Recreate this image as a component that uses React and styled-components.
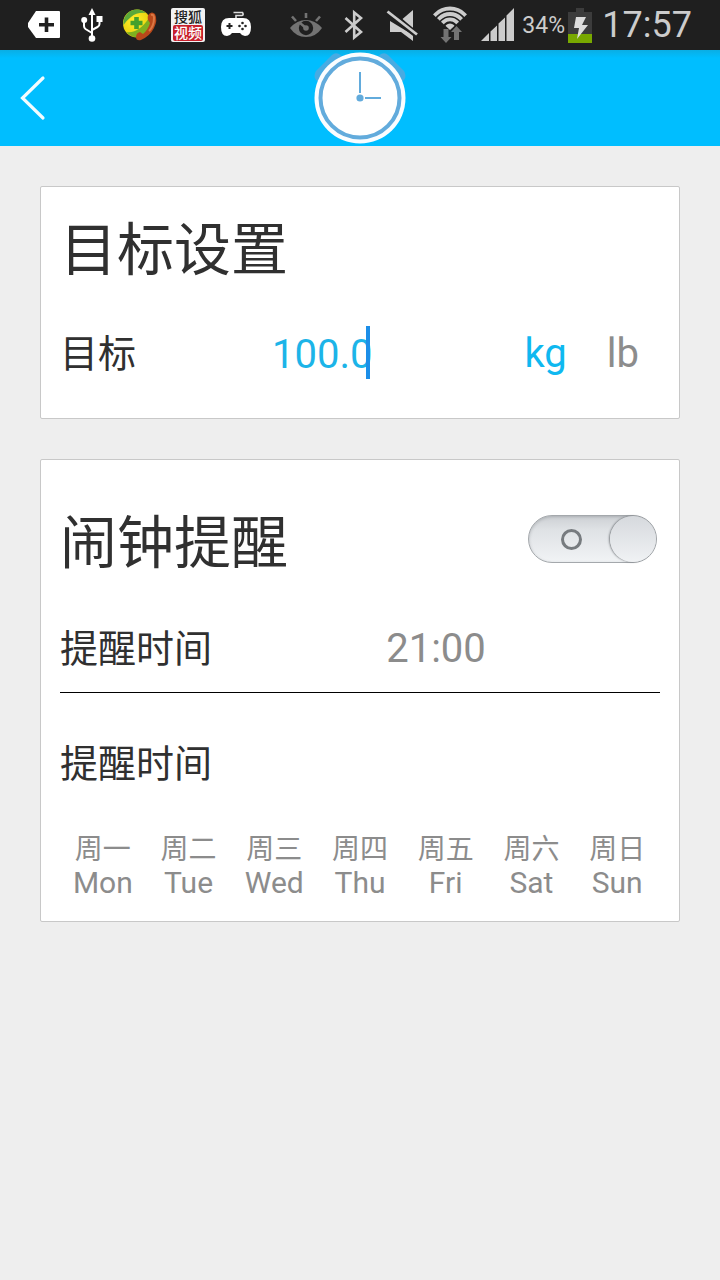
import React, { useState } from "react";
import styled, { createGlobalStyle } from "styled-components";

const DAYS = [
  { zh: "周一", en: "Mon" },
  { zh: "周二", en: "Tue" },
  { zh: "周三", en: "Wed" },
  { zh: "周四", en: "Thu" },
  { zh: "周五", en: "Fri" },
  { zh: "周六", en: "Sat" },
  { zh: "周日", en: "Sun" },
];

const PlusTagIcon = () => (
  <svg width="34" height="28" viewBox="0 0 34 28">
    <path d="M9 0H32Q33 0 33 1V26Q33 27 32 27H9L1 16V12Z" fill="#fff" />
    <path d="M19.500 6.500V21M12 13.700H27" stroke="#1f1f1f" strokeWidth="3.600" />
  </svg>
);

const UsbIcon = () => (
  <svg width="22" height="34" viewBox="0 0 22 34" fill="none" stroke="#fff" strokeWidth="2">
    <path d="M11 4V30M11 25L4.500 21Q3 20 3 18V12M11 22L16.500 19Q18.500 18 18.500 16V11" />
    <path d="M11 0L14.500 7H7.500Z" fill="#fff" stroke="none" />
    <circle cx="3.200" cy="12" r="3" fill="#fff" stroke="none" />
    <rect x="15.500" y="8" width="6" height="6" fill="#fff" stroke="none" />
    <circle cx="11" cy="30.500" r="3.300" fill="#fff" stroke="none" />
  </svg>
);

const PhoneBallIcon = () => (
  <svg width="36" height="34" viewBox="0 0 36 34">
    <defs>
      <radialGradient id="ball" cx="0.4" cy="0.4" r="0.65">
        <stop offset="0" stopColor="#fff02a" />
        <stop offset="0.75" stopColor="#ecd512" />
        <stop offset="1" stopColor="#b09a0c" />
      </radialGradient>
    </defs>
    <circle cx="15" cy="15.500" r="14" fill="url(#ball)" />
    <path d="M1.500 17A13.500 13.500 0 0 1 24 5Q15 4 9 9Q4 13 1.500 17Z" fill="#5aa83a" />
    <path d="M4 24Q17 26 27.500 9Q31 20 23 27Q13 33 4 24Z" fill="#7fb020" />
    <path d="M14.500 9V21M8.500 15H20.500" stroke="#43a02c" strokeWidth="4.600" />
    <path
      d="M27 6Q30 3 33 6Q36 12 32 20Q28 28 19 32Q14 33 14 29Q14 25 18 24L21 26Q26 22 28 15L26 12Q25 8 27 6Z"
      fill="#b9481a"
    />
    <path d="M29 7Q32 6 32 10Q32 18 27 23" fill="none" stroke="#db7844" strokeWidth="2" />
  </svg>
);

const GamepadIcon = () => (
  <svg width="32" height="28" viewBox="0 0 32 28">
    <path d="M16 8V4.500H22Q24 4 22.500 1.500H13.500" fill="none" stroke="#ddd" strokeWidth="1.600" />
    <path
      d="M9 7H23Q31 7 31 16Q31 25 25 25Q22 25 20 22H12Q10 25 7 25Q1 25 1 16Q1 7 9 7Z"
      fill="#fff"
    />
    <path d="M9.500 12V18M6.500 15H12.500" stroke="#222" strokeWidth="2" />
    <g fill="#222">
      <circle cx="22.500" cy="12" r="1.300" />
      <circle cx="22.500" cy="18" r="1.300" />
      <circle cx="19.500" cy="15" r="1.300" />
      <circle cx="25.500" cy="15" r="1.300" />
    </g>
  </svg>
);

const EyeIcon = () => (
  <svg width="32" height="26" viewBox="0 0 32 26">
    <path d="M0 16Q7 8 16 8Q25 8 32 16Q26 25 16 25Q6 25 0 16Z" fill="#737373" />
    <circle cx="16" cy="16" r="7.200" fill="#1f1f1f" />
    <circle cx="16" cy="16" r="2.800" fill="#737373" />
    <path d="M16 16L10 11" stroke="#737373" strokeWidth="2.400" />
    <path d="M2 4.500L6 9M16 1V6M30 4.500L26 9" stroke="#737373" strokeWidth="2.600" />
  </svg>
);

const BluetoothIcon = () => (
  <svg width="20" height="32" viewBox="0 0 20 32" fill="none" stroke="#ccc" strokeWidth="2.600">
    <path d="M1.500 9L17 23L10.200 28.500V3.500L17 9L1.500 23" />
  </svg>
);

const MuteIcon = () => (
  <svg width="32" height="32" viewBox="0 0 32 32">
    <path d="M27 1V20L16.500 10ZM4 12L27 26V32L15 23H4Z" fill="#ccc" />
    <path d="M2 3L31 26" stroke="#1f1f1f" strokeWidth="6.500" />
    <path d="M1.500 2.500L31 25.500" stroke="#ccc" strokeWidth="2.800" />
  </svg>
);

const WifiIcon = () => (
  <svg width="36" height="38" viewBox="0 0 36 38">
    <clipPath id="fan">
      <path d="M18 24L-6 2V-4H42V2Z" />
    </clipPath>
    <g clipPath="url(#fan)" fill="none" stroke="#ccc" strokeWidth="3.800">
      <circle cx="18" cy="23" r="20.500" />
      <circle cx="18" cy="23" r="15" />
      <circle cx="18" cy="23" r="9.600" />
      <circle cx="18" cy="23" r="5.500" fill="#ccc" stroke="none" />
    </g>
    <path
      d="M11.500 23H16.500V31H19.500L14 37L8.500 31H11.500ZM22 34H27V26H30L24.500 20L19 26H22Z"
      fill="#737373"
    />
  </svg>
);

const SignalIcon = () => (
  <svg width="34" height="34" viewBox="0 0 34 34" fill="#ccc">
    <path d="M0 33L8 25V33ZM9.500 33V23.500L16 17.500V33ZM17.500 33V15.500L24 9.500V33ZM25.500 33V7.500L33 0V33Z" />
  </svg>
);

const BatteryIcon = () => (
  <svg width="24" height="36" viewBox="0 0 24 36">
    <path d="M0 5H8V1H16V5H24V27H0Z" fill="#3c3c3c" />
    <rect y="27" width="24" height="9" fill="#78a800" />
    <path d="M8 10H18L14 18H20L9 32L11 21H6Z" fill="#ddd" />
  </svg>
);

const BackIcon = () => (
  <svg width="26" height="46" viewBox="0 0 26 46" fill="none" stroke="#f2fcff" strokeWidth="3.200">
    <path d="M23 3L2.500 23L23 43" strokeLinecap="round" />
  </svg>
);

const ClockIcon = () => (
  <svg width="92" height="92" viewBox="0 0 92 92">
    <path d="M2 28Q-1 24 2 19L18 3Q21 0 25 2L30 6L6 31Z" fill="#48abe2" />
    <path d="M90 28Q93 24 90 19L74 3Q71 0 67 2L62 6L86 31Z" fill="#48abe2" />
    <circle cx="46" cy="46" r="45.500" fill="#fafdff" />
    <circle cx="46" cy="46" r="39.500" fill="#fff" stroke="#62abdc" strokeWidth="4" />
    <g stroke="#62abdc" strokeWidth="2">
      <path d="M46 20V41M51 46H67" />
    </g>
    <circle cx="46" cy="46" r="3.600" fill="#62abdc" />
  </svg>
);

const App = () => {
  const [goal, setGoal] = useState("100.0");
  const [unit, setUnit] = useState("kg");
  const [alarm, setAlarm] = useState(false);

  return (
    <Page>
      <GlobalStyle />
      <StatusBar>
        <IconStrip>
          <IconCell><PlusTagIcon /></IconCell>
          <IconCell><UsbIcon /></IconCell>
          <IconCell><PhoneBallIcon /></IconCell>
          <IconCell>
            <SohuBadge>
              <SohuTop>搜狐</SohuTop>
              <SohuBottom>视频</SohuBottom>
            </SohuBadge>
          </IconCell>
          <IconCell><GamepadIcon /></IconCell>
        </IconStrip>
        <SystemTray>
          <IconCell><EyeIcon /></IconCell>
          <IconCell><BluetoothIcon /></IconCell>
          <IconCell><MuteIcon /></IconCell>
          <IconCell><WifiIcon /></IconCell>
          <IconCell><SignalIcon /></IconCell>
          <Percent>34%</Percent>
          <BatteryIcon />
          <Time>17:57</Time>
        </SystemTray>
      </StatusBar>

      <Header>
        <BackButton type="button" aria-label="返回">
          <BackIcon />
        </BackButton>
        <ClockIcon />
      </Header>

      <Content>
        <Card>
          <TitleRow>
            <Title>目标设置</Title>
          </TitleRow>
          <GoalRow>
            <Label htmlFor="goal">目标</Label>
            <ValueBox>
              <GoalInput
                id="goal"
                inputMode="decimal"
                value={goal}
                onChange={(e) => setGoal(e.target.value)}
              />
              <Caret />
            </ValueBox>
            <Units>
              {["kg", "lb"].map((name) => (
                <UnitButton
                  key={name}
                  type="button"
                  $active={unit === name}
                  aria-pressed={unit === name}
                  onClick={() => setUnit(name)}
                >
                  {name}
                </UnitButton>
              ))}
            </Units>
          </GoalRow>
        </Card>

        <Card>
          <TitleRow $tall>
            <Title id="alarm-title">闹钟提醒</Title>
            <Switch>
              <SwitchInput
                type="checkbox"
                aria-labelledby="alarm-title"
                checked={alarm}
                onChange={(e) => setAlarm(e.target.checked)}
              />
              <SwitchRing />
              <SwitchKnob />
            </Switch>
          </TitleRow>
          <TimeRow>
            <Label as="span">提醒时间</Label>
            <TimeButton type="button">21:00</TimeButton>
          </TimeRow>
          <RepeatRow>
            <Label as="span">提醒时间</Label>
          </RepeatRow>
          <Week>
            {DAYS.map((day) => (
              <DayButton key={day.en} type="button">
                <DayZh>{day.zh}</DayZh>
                <DayEn>{day.en}</DayEn>
              </DayButton>
            ))}
          </Week>
        </Card>
      </Content>
    </Page>
  );
};

export default App;

const GlobalStyle = createGlobalStyle`
  * {
    box-sizing: border-box;
  }

  body {
    margin: 0;
    background: #eee;
    font-family: Roboto, "Noto Sans CJK SC", sans-serif;
    color: #303030;
  }

  button,
  input {
    font-family: inherit;
    border: none;
    background: none;
    padding: 0;
  }

  svg {
    display: block;
    flex: none;
  }
`;

const Page = styled.div`
  min-height: 100vh;
  background: #eee;
`;

const StatusBar = styled.div`
  display: flex;
  justify-content: space-between;
  height: 50px;
  padding: 0 28px 0 20px;
  background: #1f1f1f;
  color: #ccc;
`;

const IconStrip = styled.div`
  display: flex;
  align-items: center;
`;

const SystemTray = styled(IconStrip)``;

const IconCell = styled.div`
  display: flex;
  align-items: center;
  justify-content: center;
  width: 48px;
  height: 48px;
`;

const SohuBadge = styled.div`
  width: 34px;
  height: 34px;
  padding: 1px 2px;
  border-radius: 2px;
  background: #f2f2f2;
  font-size: 14px;
  font-weight: 500;
  line-height: 16px;
  text-align: center;
`;

const SohuTop = styled.div`
  color: #222;
`;

const SohuBottom = styled.div`
  border-radius: 2px;
  background: #c8202c;
  color: #fff;
`;

const Percent = styled.span`
  width: 46px;
  font-size: 23px;
`;

const Time = styled.span`
  margin-left: 10px;
  font-size: 36px;
  line-height: 48px;
`;

const Header = styled.header`
  display: grid;
  grid-template-columns: 1fr auto 1fr;
  align-items: center;
  height: 96px;
  background: linear-gradient(#0aaee4, #00beff 8px);
`;

const BackButton = styled.button`
  justify-self: start;
  padding: 10px 20px;
`;

const Content = styled.main`
  display: flex;
  flex-direction: column;
  gap: 40px;
  padding: 40px;
`;

const Card = styled.section`
  padding: 19px;
  border: 1px solid #c8c8c8;
  border-radius: 2px;
  background: #fff;
`;

const TitleRow = styled.div`
  display: flex;
  align-items: center;
  justify-content: space-between;
  height: ${({ $tall }) => ($tall ? "130px" : "90px")};
`;

const Title = styled.h1`
  margin: 0;
  font-size: 57px;
  font-weight: 400;
  line-height: 80px;
`;

const Label = styled.label`
  font-size: 38px;
  line-height: 56px;
`;

const GoalRow = styled.div`
  display: grid;
  grid-template-columns: 1fr 1fr 1fr;
  align-items: center;
  height: 103px;
  padding-top: 13px;
`;

const ValueBox = styled.div`
  position: relative;
  padding-left: 12px;
`;

const GoalInput = styled.input`
  display: block;
  width: 100%;
  height: 56px;
  color: #1cb4e8;
  font-size: 40px;
  outline: none;
`;

const Caret = styled.span`
  position: absolute;
  top: 0;
  left: 106px;
  width: 4px;
  height: 53px;
  background: #1c8ee8;
`;

const Units = styled.div`
  display: flex;
  justify-content: flex-end;
  gap: 40px;
  padding-right: 21px;
`;

const UnitButton = styled.button`
  color: ${({ $active }) => ($active ? "#0fb8f0" : "#8c8c8c")};
  font-size: 40px;
  line-height: 56px;
`;

const Switch = styled.label`
  position: relative;
  display: flex;
  align-items: center;
  width: 129px;
  height: 48px;
  margin-top: -10px;
  margin-right: 3px;
  border: 1px solid #a4a8ac;
  border-radius: 24px;
  background: linear-gradient(#cdd0d4, #dfe2e5 30%, #f1f3f5);
  box-shadow: inset 0 1px 3px rgba(90, 95, 100, 0.3);
`;

const SwitchInput = styled.input`
  position: absolute;
  inset: 0;
  width: 100%;
  height: 100%;
  margin: 0;
  opacity: 0;
`;

const SwitchRing = styled.span`
  width: 21px;
  height: 21px;
  margin-left: 32px;
  border: 3px solid #777b7f;
  border-radius: 50%;
`;

const SwitchKnob = styled.span`
  width: 46px;
  height: 46px;
  margin-left: auto;
  border-radius: 50%;
  background: linear-gradient(#d6d9dd, #f0f2f4);
  box-shadow: -1px 0 2px rgba(60, 65, 70, 0.6);
`;

const TimeRow = styled.div`
  display: flex;
  align-items: center;
  height: 84px;
  padding-bottom: 4px;
  border-bottom: 1px solid #000;
`;

const TimeButton = styled.button`
  flex: 1;
  color: #8c8c8c;
  font-size: 40px;
`;

const RepeatRow = styled.div`
  display: flex;
  align-items: center;
  height: 141px;
`;

const Week = styled.div`
  display: grid;
  grid-template-columns: repeat(7, 1fr);
  padding-bottom: 2px;
`;

const DayButton = styled.button`
  display: flex;
  flex-direction: column;
  align-items: center;
  color: #8c8c8c;
`;

const DayZh = styled.span`
  font-size: 28px;
  line-height: 32px;
`;

const DayEn = styled.span`
  font-size: 30px;
  line-height: 34px;
`;
